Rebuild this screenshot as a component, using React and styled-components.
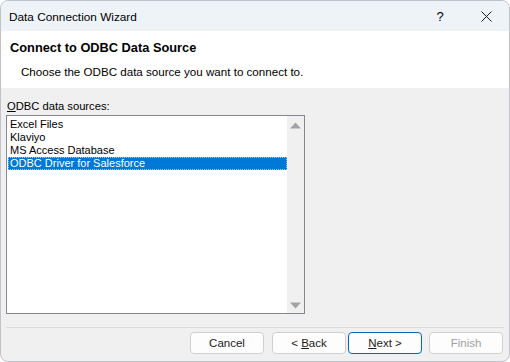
import React from 'react';
import styled, { createGlobalStyle } from 'styled-components';

const GlobalStyle = createGlobalStyle`
  * { box-sizing: border-box; }
  html, body { margin: 0; padding: 0; background: #ffffff; }
  body { font-family: "Liberation Sans", Arial, sans-serif; color: #000; }
`;

const Window = styled.div`
  width: 510px;
  height: 362px;
  border: 1px solid #bfc3c9;
  border-radius: 8px;
  overflow: hidden;
  display: flex;
  flex-direction: column;
  background: #f0f0f0;
`;

const TitleBar = styled.div`
  height: 30px;
  background: #eef3f8;
  display: flex;
  align-items: center;
  padding-left: 8px;
  font-size: 11.8px;
`;

const Title = styled.div`
  flex: 1;
  padding-top: 1px;
`;

const TitleButton = styled.div`
  width: 46px;
  height: 30px;
  display: flex;
  align-items: center;
  justify-content: center;
  font-size: 13px;
`;

const Header = styled.div`
  height: 57px;
  background: #ffffff;
  padding: 9px 0 0 9px;
`;

const Heading = styled.div`
  font-size: 12.8px;
  font-weight: bold;
  line-height: 16px;
`;

const SubHeading = styled.div`
  font-size: 11.6px;
  line-height: 15px;
  margin: 8px 0 0 11px;
`;

const Body = styled.div`
  flex: 1;
  display: flex;
  flex-direction: column;
  padding: 11px 5px 0 5px;
`;

const Label = styled.div`
  font-size: 11.2px;
  line-height: 14px;
  padding-left: 1px;
`;

const Key = styled.span`
  text-decoration: underline;
`;

const ListBox = styled.div`
  margin-top: 2px;
  width: 299px;
  height: 199px;
  border: 1px solid #828790;
  background: #ffffff;
  display: flex;
`;

const Items = styled.div`
  flex: 1;
  padding: 2px 0 0 1px;
`;

const Item = styled.div`
  height: 13px;
  line-height: 13px;
  font-size: 11px;
  padding-left: 2px;
  color: ${p => (p.$selected ? '#ffffff' : '#000000')};
  background: ${p => (p.$selected ? '#0078d7' : 'transparent')};
  outline: ${p => (p.$selected ? '1px dotted #9cc8f0' : 'none')};
  outline-offset: -1px;
`;

const ScrollBar = styled.div`
  width: 17px;
  background: #f0f0f0;
  display: flex;
  flex-direction: column;
  justify-content: space-between;
  align-items: center;
  padding: 6px 0 4px;
`;

const Separator = styled.div`
  margin-top: 13px;
  height: 1px;
  background: #dadada;
`;

const Footer = styled.div`
  display: flex;
  justify-content: flex-end;
  padding: 4px 1px 0 0;
`;

const Button = styled.div`
  width: 74px;
  height: 22px;
  margin-left: ${p => p.$gap}px;
  border: 1px solid ${p => (p.$default ? '#0067c0' : '#d0d0d0')};
  border-radius: 4px;
  background: #fdfdfd;
  color: ${p => (p.$disabled ? '#a0a0a0' : '#1a1a1a')};
  font-size: 11.5px;
  display: flex;
  align-items: center;
  justify-content: center;
`;

const Arrow = ({ up }) => (
  <svg width="11" height="7" viewBox="0 0 11 7">
    <path d={up ? 'M0 6.5 L5.5 0.5 L11 6.5 Z' : 'M0 0.5 L5.5 6.5 L11 0.5 Z'} fill="#a3a3a3" />
  </svg>
);

const sources = ['Excel Files', 'Klaviyo', 'MS Access Database', 'ODBC Driver for Salesforce'];

export default function App() {
  return (
    <>
      <GlobalStyle />
      <Window>
        <TitleBar>
          <Title>Data Connection Wizard</Title>
          <TitleButton>?</TitleButton>
          <TitleButton>
            <svg width="11" height="11" viewBox="0 0 11 11">
              <path d="M0.5 0.5 L10.5 10.5 M10.5 0.5 L0.5 10.5" stroke="#1a1a1a" strokeWidth="1" />
            </svg>
          </TitleButton>
        </TitleBar>
        <Header>
          <Heading>Connect to ODBC Data Source</Heading>
          <SubHeading>Choose the ODBC data source you want to connect to.</SubHeading>
        </Header>
        <Body>
          <Label><Key>O</Key>DBC data sources:</Label>
          <ListBox>
            <Items>
              {sources.map((s, i) => (
                <Item key={s} $selected={i === sources.length - 1}>{s}</Item>
              ))}
            </Items>
            <ScrollBar>
              <Arrow up />
              <Arrow />
            </ScrollBar>
          </ListBox>
          <Separator />
          <Footer>
            <Button $gap={0}>Cancel</Button>
            <Button $gap={8}>&lt;&nbsp;<Key>B</Key>ack</Button>
            <Button $gap={2} $default><Key>N</Key>ext &gt;</Button>
            <Button $gap={7} $disabled>Finish</Button>
          </Footer>
        </Body>
      </Window>
    </>
  );
}
